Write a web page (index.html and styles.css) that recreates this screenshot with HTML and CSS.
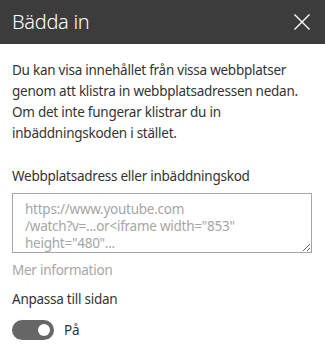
FILE: index.html
```html
<!DOCTYPE html>
<html lang="sv">
<head>
<meta charset="utf-8">
<title>Bädda in</title>
<link rel="stylesheet" href="styles.css">
</head>
<body>
<div class="panel">
  <header class="panel-header">
    <h1 class="panel-title">Bädda in</h1>
    <button class="close-btn" aria-label="Stäng">
      <svg width="16" height="16" viewBox="0 0 16 16"><path d="M0.5 0.5 L15.5 15.5 M15.5 0.5 L0.5 15.5" stroke="#fff" stroke-width="1.4" fill="none"/></svg>
    </button>
  </header>
  <div class="panel-body">
    <p class="intro">Du kan visa innehållet från vissa webbplatser genom att klistra in webbplatsadressen nedan. Om det inte fungerar klistrar du in inbäddningskoden i stället.</p>
    <label class="field-label" for="embed">Webbplatsadress eller inbäddningskod</label>
    <div class="textarea-wrap">
      <textarea id="embed" class="embed-input" placeholder="https://www.youtube.com&#10;/watch?v=...or&lt;iframe width=&quot;853&quot;&#10;height=&quot;480&quot;..."></textarea>
    </div>
    <a class="more-info">Mer information</a>
    <div class="toggle-label">Anpassa till sidan</div>
    <div class="toggle-row">
      <span class="toggle"><span class="knob"></span></span>
      <span class="toggle-text">På</span>
    </div>
  </div>
</div>
</body>
</html>
```
FILE: styles.css
```css
* { box-sizing: border-box; }
html, body { margin: 0; padding: 0; background: #fff; }
body {
  font-family: "Noto Sans", "Open Sans", "Liberation Sans", sans-serif;
  color: #333;
  width: 325px;
  height: 349px;
  overflow: hidden;
}
.panel-header {
  height: 44px;
  background: #3c3c3c;
  display: flex;
  align-items: center;
  justify-content: space-between;
  padding: 0 15px 0 12px;
}
.panel-title {
  margin: 0;
  font-weight: 300;
  font-size: 20px;
  color: #fff;
  letter-spacing: -0.3px;
  line-height: 26px;
}
.close-btn {
  background: none;
  border: 0;
  padding: 0;
  width: 16px;
  height: 16px;
  display: flex;
}
.panel-body {
  padding: 16px 12px 0 12px;
  font-size: 13.5px;
  letter-spacing: -0.25px;
}
.intro {
  margin: 0;
  line-height: 21px;
  color: #333;
}
.field-label {
  display: block;
  margin-top: 22px;
  line-height: 20px;
  color: #333;
}
.textarea-wrap {
  margin-top: 7px;
  width: 300px;
  height: 60px;
  border: 1px solid #a6a6a6;
  position: relative;
}
.embed-input {
  display: block;
  width: 100%;
  height: 100%;
  border: 0;
  padding: 7px 12px 0 12px;
  font-family: inherit;
  font-size: 13.5px;
  letter-spacing: -0.25px;
  line-height: 17px;
  resize: both;
  overflow: hidden;
  outline: none;
  white-space: pre;
}
.embed-input::placeholder { color: #a6a6a6; opacity: 1; }
.more-info {
  display: block;
  margin-top: 7px;
  color: #a6a6a6;
  line-height: 20px;
}
.toggle-label {
  margin-top: 9px;
  line-height: 20px;
  color: #333;
}
.toggle-row {
  margin-top: 11px;
  display: flex;
  align-items: center;
  gap: 10px;
}
.toggle {
  width: 42px;
  height: 20px;
  border-radius: 10px;
  background: #666;
  position: relative;
  display: block;
}
.knob {
  position: absolute;
  right: 4px;
  top: 4px;
  width: 12px;
  height: 12px;
  border-radius: 50%;
  background: #fff;
}
.toggle-text { line-height: 20px; color: #333; }
```
